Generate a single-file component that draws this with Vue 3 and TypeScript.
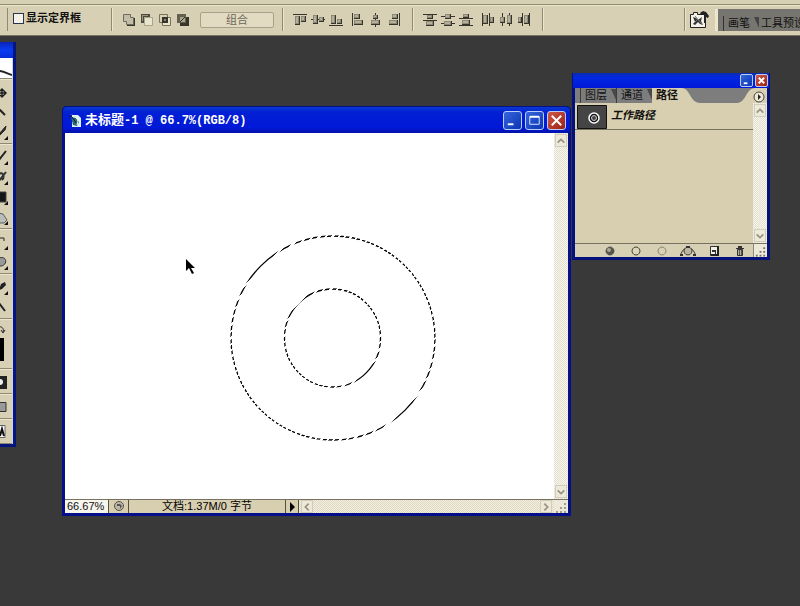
<script setup lang="ts">
import { ref } from 'vue'

interface Shape {
  d: string
  fill?: string
  stroke?: string
  width?: number
}
interface Icon {
  label: string
  shapes: Shape[]
}

const dark = '#37352b'
const mid = '#8b8878'
const pale = '#e9e4cc'

const box = (x: number, y: number, w: number, h: number): string => `M${x} ${y}h${w}v${h}h${-w}z`
const block = (x: number, y: number, w: number, h: number): Shape[] => [
  { d: box(x, y, w, h), fill: dark },
  { d: box(x, y, w - 1, h - 1), fill: mid },
  { d: box(x + 1, y + 1, w - 3, h - 3), fill: '#b5b09a' },
]
const bar = (x: number, y: number, w: number, h: number): Shape => ({ d: box(x, y, w, h), fill: dark })

const combine: Icon[] = [
  {
    label: '添加到形状区域',
    shapes: [
      { d: 'M5 5h8v8h-8z', fill: dark },
      { d: 'M1.5 1.5h7v3h3v7h-7v-3h-3z', fill: '#c1bda9', stroke: '#6d6a5a' },
    ],
  },
  {
    label: '从形状区域减去',
    shapes: [
      { d: 'M4.5 4.5h8v8h-8z', fill: pale, stroke: '#aaa58d' },
      { d: 'M1 1h9v3h-6v6h-3z', fill: '#4e4b3e' },
      { d: 'M2 2h6v1h-5v5h-1z', fill: '#98937e' },
    ],
  },
  {
    label: '交叉形状区域',
    shapes: [
      { d: 'M4.5 4.5h8v8h-8z', fill: pale, stroke: '#77725f' },
      { d: 'M1.5 1.5h8v8h-8z', stroke: '#77725f' },
      { d: 'M4 4h6v6h-6z', fill: dark },
      { d: 'M6 6h2v2h-2z', fill: mid },
    ],
  },
  {
    label: '重叠形状区域除外',
    shapes: [
      { d: 'M4 4h9v9h-9z', fill: dark },
      { d: 'M1 1h9v9h-9z', fill: '#65614f' },
      { d: 'M4 4h5v5h-5z', fill: '#a8a38d' },
      { d: 'M4 9l5-5', stroke: dark },
    ],
  },
]

const arrange: Icon[][] = [
  [
    { label: '顶对齐', shapes: [bar(0, 1, 14, 1), ...block(2, 3, 5, 9), ...block(8, 3, 5, 6)] },
    { label: '垂直居中对齐', shapes: [bar(0, 6, 14, 1), ...block(2, 2, 5, 9), ...block(8, 4, 5, 5)] },
    { label: '底对齐', shapes: [bar(0, 12, 14, 1), ...block(2, 2, 5, 9), ...block(8, 6, 5, 5)] },
  ],
  [
    { label: '左对齐', shapes: [bar(1, 0, 1, 13), ...block(3, 1, 6, 5), ...block(3, 7, 9, 5)] },
    { label: '水平居中对齐', shapes: [bar(6, 0, 1, 14), ...block(4, 2, 5, 4), ...block(2, 7, 9, 5)] },
    { label: '右对齐', shapes: [bar(12, 0, 1, 13), ...block(5, 1, 6, 5), ...block(2, 7, 9, 5)] },
  ],
  [
    { label: '按顶分布', shapes: [bar(0, 1, 14, 1), ...block(4, 2, 6, 4), bar(0, 7, 14, 1), ...block(3, 8, 8, 5)] },
    { label: '垂直居中分布', shapes: [bar(0, 3, 14, 1), ...block(4, 1, 6, 5), bar(0, 10, 14, 1), ...block(3, 8, 8, 5)] },
    { label: '按底分布', shapes: [...block(4, 1, 6, 4), bar(0, 5, 14, 1), ...block(3, 7, 8, 5), bar(0, 12, 14, 1)] },
  ],
  [
    { label: '按左分布', shapes: [bar(1, 0, 1, 13), ...block(2, 2, 5, 9), bar(8, 0, 1, 13), ...block(9, 4, 4, 6)] },
    { label: '水平居中分布', shapes: [bar(3, 0, 1, 13), ...block(1, 4, 5, 6), bar(10, 0, 1, 13), ...block(8, 2, 5, 9)] },
    { label: '按右分布', shapes: [...block(1, 4, 4, 6), bar(5, 0, 1, 13), ...block(7, 2, 5, 9), bar(12, 0, 1, 13)] },
  ],
]

const corner: Shape = { d: 'M8 15v-4l-4 4z', fill: '#111' }

const toolGroups: Icon[][] = [
  [
    { label: '移动', shapes: [{ d: 'M-1 8H6M2 4V12M0 6l2-2 2 2M0 10l2 2 2-2M4 6l2 2-2 2', stroke: '#222', width: 1.5 }] },
    { label: '魔棒', shapes: [{ d: 'M-1 4L5 10', stroke: '#222', width: 2 }] },
    { label: '切片', shapes: [{ d: 'M-1 9L6 1L5 5L0 10z', fill: '#333', stroke: '#222' }, corner] },
  ],
  [
    { label: '画笔', shapes: [{ d: 'M-1 10L6 1', stroke: '#222', width: 2 }, corner] },
    { label: '历史记录画笔', shapes: [{ d: 'M-1 11L6 2M-1 4C3 1 5 7 2 10', stroke: '#333', width: 2 }, corner] },
    { label: '渐变', shapes: [{ d: 'M-1 2h7v10h-7z', fill: '#151515', stroke: '#444' }, corner] },
    { label: '减淡', shapes: [{ d: 'M-2 3L3 4L7 10L4 13H-2z', fill: '#b9beb8', stroke: '#596061' }, corner] },
  ],
  [
    { label: '文字', shapes: [{ d: 'M-1 3H4V6M-1 3V12', stroke: '#222', width: 1 }, corner] },
    { label: '形状', shapes: [{ d: 'M-1 3C8 0 8 12 -1 11z', fill: '#999', stroke: '#333' }, corner] },
  ],
  [
    { label: '吸管', shapes: [{ d: 'M-1 10L1 4L5 2L6 5L2 9z', fill: '#222' }, corner] },
    { label: '缩放', shapes: [{ d: 'M-1 3L5 11', stroke: '#222', width: 2 }] },
  ],
]

const pathActions: Icon[] = [
  {
    label: '填充路径',
    shapes: [
      { d: 'M8 2a4 4 0 1 0 .01 0z', fill: '#55534a', stroke: '#555', width: 1 },
      { d: 'M7 3a2 2 0 1 0 .01 0z', fill: '#aaa791' },
    ],
  },
  { label: '描边路径', shapes: [{ d: 'M8 2a4 4 0 1 0 .01 0z', fill: '#ddd5bb', stroke: '#454338', width: 1 }] },
  { label: '载入选区', shapes: [{ d: 'M8 2a4 4 0 1 0 .01 0z', stroke: '#8b8774', width: 1 }] },
  {
    label: '生成工作路径',
    shapes: [
      { d: 'M0 10C2 8 2 4 7 3H9C14 4 14 8 16 10', stroke: '#333', width: 1 },
      { d: 'M8 2a4 4 0 1 0 .01 0z', fill: '#bdb69d', stroke: '#444', width: 1 },
      { d: 'M6 1h4v2h-4zM0 9h3v2h-3zM13 9h3v2h-3z', fill: '#333' },
    ],
  },
  {
    label: '新建路径',
    shapes: [
      { d: 'M4.5 1.5h7v9h-7z', fill: '#f3f0e4', stroke: '#333', width: 1 },
      { d: 'M11 1h2v10h-8v-2h6z', fill: '#222' },
      { d: 'M6 5h4v4h-1v-2h-3z', fill: '#333' },
    ],
  },
  {
    label: '删除路径',
    shapes: [
      { d: 'M5.5 4.5h5v6h-5z', fill: '#b7b19b', stroke: '#333', width: 1 },
      { d: 'M4 3h8v1h-8zM6 1h4v2h-4z', fill: '#333' },
      { d: 'M7.5 5v5M9.5 5v5', stroke: '#555', width: 1 },
    ],
  },
]

const tabs = ['图层', '通道', '路径']
const activeTab = ref('路径')
const showBounds = ref(false)
const zoom = ref('66.67%')
</script>

<template>
  <div class="workspace">
    <header class="options">
      <div class="field first">
        <input id="bounds" v-model="showBounds" type="checkbox" />
        <label for="bounds">显示定界框</label>
      </div>
      <div class="section combine">
        <div class="icons">
          <button v-for="i in combine" :key="i.label" class="ico" :aria-label="i.label">
            <svg viewBox="0 0 14 14"><path v-for="(s, n) in i.shapes" :key="n" :d="s.d" :fill="s.fill ?? 'none'" :stroke="s.stroke ?? 'none'" :stroke-width="s.width ?? 1" /></svg>
          </button>
        </div>
        <button class="group-btn">组合</button>
      </div>
      <div v-for="pair in [0, 2]" :key="pair" class="section arrange">
        <div v-for="g in [pair, pair + 1]" :key="g" class="icons">
          <button v-for="i in arrange[g]" :key="i.label" class="ico" :aria-label="i.label">
            <svg viewBox="0 0 14 14"><path v-for="(s, n) in i.shapes" :key="n" :d="s.d" :fill="s.fill ?? 'none'" :stroke="s.stroke ?? 'none'" :stroke-width="s.width ?? 1" /></svg>
          </button>
        </div>
      </div>
      <div class="section spacer"></div>
      <div class="section browse">
        <button class="browser" aria-label="文件浏览器">
          <svg viewBox="0 0 20 18">
            <path d="M1.500 16.500V3.500h3v-2h4v2h8v13z" fill="#f4f2e6" stroke="#222" />
            <path d="M4 6l3 1 2 2 4-3-1 4 2 4-3-1-2-2-3 3-2-1 2-2z" fill="#333" />
            <path d="M4 13l4-4M6 5l7 8" stroke="#777" />
            <path d="M11 2l3-2 3 1 3 4-1 2-2-1v6h-2V4h-3z" fill="#222" />
          </svg>
        </button>
      </div>
      <div class="well">
        <button>画笔<svg viewBox="0 0 9 15"><path d="M0 1h4l5 11V1z" fill="#444" /></svg></button>
        <button>工具预设</button>
      </div>
    </header>

    <aside class="toolbox">
      <div class="bar"></div>
      <div class="tools">
        <div class="feather">
          <svg viewBox="0 0 12 20"><path d="M-1 13C4 13 8 16 12 17" fill="none" stroke="#222" stroke-width="2" /></svg>
        </div>
        <div v-for="(g, k) in toolGroups" :key="k" class="tool-group">
          <button v-for="i in g" :key="i.label" class="tool" :aria-label="i.label">
            <svg viewBox="0 0 10 16"><path v-for="(s, n) in i.shapes" :key="n" :d="s.d" :fill="s.fill ?? 'none'" :stroke="s.stroke ?? 'none'" :stroke-width="s.width ?? 1" /></svg>
          </button>
        </div>
        <div class="tool-group swatch">
          <svg viewBox="0 0 10 45">
            <path d="M-1 6C3 5 4 9 3 11M1 9l2 3 2-3" fill="none" stroke="#222" />
            <path d="M-1 17h5v23h-5z" fill="#000" />
          </svg>
        </div>
        <div class="tool-group mode">
          <svg viewBox="0 0 10 20"><path d="M-1 5h8v13h-8z" fill="#222" /><circle cx="0" cy="11" r="3" fill="#eee" /></svg>
        </div>
        <div class="tool-group mode">
          <svg viewBox="0 0 10 20"><path d="M-1 6.500h7v9h-7z" fill="#999" stroke="#333" /></svg>
        </div>
        <div class="tool-group mode">
          <svg viewBox="0 0 10 20"><path d="M-1 4.500h6v12h-6z" fill="#fff" stroke="#666" /><path d="M0 15l2-7 2 7" fill="none" stroke="#111" stroke-width="2" /></svg>
        </div>
      </div>
    </aside>

    <main class="doc">
      <div class="title">
        <svg class="logo" viewBox="0 0 14 16">
          <path d="M1 1l3 1v12h9V5l-3-3H5" fill="#dff1ef" />
          <path d="M3 4l5 1 3 4-2 4-4-1-1-4z" fill="#246b76" />
          <path d="M1 2l4 3 3 5" fill="none" stroke="#123" />
          <path d="M8 4l2 4-1 4" fill="none" stroke="#eaf7ee" />
        </svg>
        <h1><span>未标题</span>-1 @ 66.7%(RGB/8)</h1>
        <button class="win" aria-label="最小化"><svg viewBox="0 0 18 18"><path d="M4 12h6v2h-6z" fill="#fff" /></svg></button>
        <button class="win" aria-label="最大化"><svg viewBox="0 0 18 18"><path d="M4 5h10v8h-10z" fill="none" stroke="#dfe9ff" /><path d="M4 4h10v2h-10z" fill="#fff" /></svg></button>
        <button class="win close" aria-label="关闭"><svg viewBox="0 0 18 18"><path d="M4 4l10 10M14 4l-10 10" stroke="#fff" stroke-width="2" /></svg></button>
      </div>
      <div class="view">
        <div class="canvas">
          <svg class="ants">
            <defs>
              <linearGradient id="march" gradientUnits="userSpaceOnUse" x1="163.7" y1="163.7" x2="166.9" y2="166.9" spreadMethod="repeat">
                <stop offset="0" stop-color="#000" />
                <stop offset="0.6" stop-color="#000" />
                <stop offset="0.6" stop-color="#fff" />
                <stop offset="1" stop-color="#fff" />
              </linearGradient>
            </defs>
            <ellipse cx="268" cy="205" rx="102" ry="102" />
            <ellipse cx="267.5" cy="205" rx="48" ry="49" />
          </svg>
          <svg class="cursor" viewBox="0 0 11 17"><path d="M1 0v12l3-3 3 6 2-1-3-5h4z" fill="#000" /></svg>
        </div>
        <div class="vscroll">
          <button aria-label="向上"><svg viewBox="0 0 12 12"><path d="M2 8l4-4 4 4" /></svg></button>
          <button aria-label="向下"><svg viewBox="0 0 12 12"><path d="M2 4l4 4 4-4" /></svg></button>
        </div>
      </div>
      <div class="status">
        <input v-model="zoom" class="zoom" aria-label="缩放比例" />
        <button class="cue" aria-label="版本提示">
          <svg viewBox="0 0 12 12"><circle cx="6" cy="6" r="4.500" fill="#bbb7a4" stroke="#555" /><path d="M4 4h3l2 2-2 3V6H4z" fill="#555" /></svg>
        </button>
        <span class="info">文档:1.37M/0 字节</span>
        <button class="more" aria-label="状态选项"><svg viewBox="0 0 12 12"><path d="M4 1l5 5-5 5z" fill="#000" /></svg></button>
        <div class="hscroll">
          <button aria-label="向左"><svg viewBox="0 0 12 12"><path d="M8 2l-4 4 4 4" /></svg></button>
          <button aria-label="向右"><svg viewBox="0 0 12 12"><path d="M4 2l4 4-4 4" /></svg></button>
        </div>
        <svg class="grip" viewBox="0 0 14 13"><path d="M10 3h2v2h-2zM10 7h2v2h-2zM6 7h2v2h-2zM10 11h2v2h-2zM6 11h2v2h-2zM2 11h2v2h-2z" fill="#a29f91" /></svg>
      </div>
    </main>

    <section class="panel">
      <div class="panel-bar">
        <button class="win" aria-label="最小化"><svg viewBox="0 0 12 12"><path d="M3 8h4v2h-4z" fill="#fff" /></svg></button>
        <button class="win close" aria-label="关闭"><svg viewBox="0 0 12 12"><path d="M3 3l6 6M9 3l-6 6" stroke="#fff" stroke-width="2" /></svg></button>
      </div>
      <div class="tabs">
        <button v-for="t in tabs" :key="t" :class="{ active: t === activeTab }" @click="activeTab = t">
          {{ t }}
          <svg v-if="t === activeTab" class="slope" viewBox="0 0 18 15"><path d="M0 0C8 0 8 15 18 15H0z" fill="#d8ceb0" /></svg>
          <svg v-else class="notch" viewBox="0 0 9 15"><path d="M0 1h4l5 11V1z" fill="#484848" /></svg>
        </button>
        <button class="menu" aria-label="面板菜单">
          <svg viewBox="0 0 30 15">
            <path d="M0 15C9 15 9 0 18 0H30V15z" fill="#d8ceb0" />
            <circle cx="22" cy="9" r="5" fill="#eee8d4" stroke="#444" />
            <path d="M21 6l3 3-3 3z" fill="#222" />
          </svg>
        </button>
      </div>
      <div class="panel-body">
        <ul>
          <li>
            <svg class="thumb" viewBox="0 0 30 24">
              <path d="M.5.5h29v23h-29z" fill="#454545" stroke="#111" />
              <circle cx="17" cy="13" r="5" fill="#111" stroke="#fff" stroke-width="1.500" />
              <circle cx="17" cy="13" r="2.500" fill="#454545" stroke="#ccc" />
            </svg>
            <em>工作路径</em>
          </li>
        </ul>
        <div class="vscroll">
          <button aria-label="向上"><svg viewBox="0 0 12 12"><path d="M2 8l4-4 4 4" /></svg></button>
          <button aria-label="向下"><svg viewBox="0 0 12 12"><path d="M2 4l4 4 4-4" /></svg></button>
        </div>
      </div>
      <div class="panel-foot">
        <button v-for="i in pathActions" :key="i.label" :aria-label="i.label">
          <svg viewBox="0 0 16 12"><path v-for="(s, n) in i.shapes" :key="n" :d="s.d" :fill="s.fill ?? 'none'" :stroke="s.stroke ?? 'none'" :stroke-width="s.width ?? 1" /></svg>
        </button>
        <svg class="grip" viewBox="0 0 14 13"><path d="M10 3h2v2h-2zM10 7h2v2h-2zM6 7h2v2h-2zM10 11h2v2h-2zM6 11h2v2h-2zM2 11h2v2h-2z" fill="#77735f" /></svg>
      </div>
    </section>
  </div>
</template>

<style>
body {
  margin: 0;
}
</style>

<style scoped>
* {
  box-sizing: border-box;
}
.workspace {
  position: relative;
  min-height: 100vh;
  overflow: hidden;
  background: #393939;
  color: #111;
  font: 11px/14px 'Liberation Sans', 'Noto Sans CJK SC', sans-serif;
}
button {
  margin: 0;
  padding: 0;
  border: 0;
  background: none;
  color: inherit;
  font: inherit;
}
svg {
  display: block;
}

/* Options bar */
.options {
  display: flex;
  height: 36px;
  padding: 8px 0 4px;
  border-bottom: 1px solid #77725f;
  background: linear-gradient(#d8d0b4 4px, #8f8a74 4px, #8f8a74 5px, #ece6cd 5px, #ece6cd 6px, #d8d0b4 6px);
}
.field {
  display: flex;
  align-items: center;
  gap: 2px;
  width: 104px;
  margin-left: 7px;
  padding: 0 0 3px 5px;
  border-left: 1px solid #8f8a74;
  white-space: nowrap;
  font-weight: 700;
}
.field input {
  appearance: none;
  width: 11px;
  height: 11px;
  margin: 0;
  border: 1px solid #26364f;
  background: #f3f1e8;
}
.field input:checked {
  background: #26364f;
}
.section {
  display: flex;
  align-items: center;
  padding: 0 10px;
  border-left: 1px solid #8f8a74;
  box-shadow: inset 1px 0 #ece6cd;
}
.icons {
  display: flex;
  gap: 3px;
}
.ico {
  width: 15px;
  height: 14px;
}
.ico svg {
  width: 14px;
  height: 14px;
}
.combine {
  width: 171px;
  justify-content: space-between;
  padding: 0 8px 0 10px;
}
.group-btn {
  width: 74px;
  height: 16px;
  border: 1px solid #a7a18a;
  border-radius: 2px;
  background: #e2dbc1;
  color: #6b6756;
  line-height: 14px;
}
.arrange {
  width: 130px;
  justify-content: space-between;
}
.spacer {
  flex: 1;
}
.browse {
  width: 31px;
  padding: 0 4px;
}
.browser svg {
  width: 20px;
  height: 18px;
}
.well {
  display: flex;
  align-items: flex-end;
  flex: 0 0 85px;
  overflow: hidden;
  margin-top: 1px;
  padding-left: 5px;
  border-left: 3px solid #ece6cd;
  background: #77756f;
}
.well button {
  display: flex;
  flex: none;
  height: 15px;
  padding-left: 4px;
  border-left: 1px solid #333;
  white-space: nowrap;
}
.well button:last-child {
  padding-left: 2px;
  border: 0;
}
.well svg,
.tabs .notch {
  flex: none;
  width: 9px;
  height: 15px;
}

/* Toolbox */
.toolbox {
  position: absolute;
  top: 42px;
  left: 0;
  width: 16px;
  padding: 0 3px 3px 0;
  background: #06147e;
}
.toolbox .bar {
  height: 16px;
  background: linear-gradient(#0924b8, #0a3cf0 50%, #0630d8);
}
.tools {
  border-right: 1px solid #c9d6e6;
  background: #d8d0b4;
}
.feather {
  height: 21px;
  border-bottom: 1px solid #8f8a74;
  background: #fff;
}
.feather svg {
  width: 12px;
  height: 20px;
}
.tool-group {
  padding: 2px 0;
  border-bottom: 1px solid #8f8a74;
  box-shadow: inset 0 1px #ece6cd;
}
.tool {
  display: flex;
  align-items: flex-end;
  height: 20px;
}
.tool svg {
  width: 10px;
  height: 16px;
}
.swatch svg {
  width: 10px;
  height: 45px;
}
.mode svg {
  width: 10px;
  height: 20px;
}

/* Document window */
.doc {
  position: absolute;
  top: 106px;
  left: 62px;
  display: flex;
  flex-direction: column;
  width: 509px;
  height: 410px;
  padding: 0 3px 3px;
  border-radius: 5px 5px 0 0;
  background: #04108a;
}
.title {
  display: flex;
  align-items: center;
  gap: 3px;
  height: 27px;
  margin: 0 -3px;
  padding: 1px 4px 0 5px;
  border: 1px solid #04108a;
  border-bottom: 0;
  border-radius: 5px 5px 0 0;
  background: linear-gradient(#0a3ad0, #0220d4 20%, #0018d8 80%, #0212a8);
}
.logo {
  width: 14px;
  height: 16px;
}
.title h1 {
  flex: 1;
  margin: 0;
  color: #fff;
  font: 700 12px/16px 'Liberation Mono', 'Noto Sans CJK SC', monospace;
  white-space: pre;
}
.title h1 span {
  font-size: 13px;
}
.win {
  width: 19px;
  height: 19px;
  border: 1px solid #b9cdf5;
  border-radius: 3px;
  background: linear-gradient(135deg, #3566dc, #0b34b4);
}
.win.close {
  background: linear-gradient(135deg, #cf5a48, #9c2015);
}
.win svg {
  width: 100%;
  height: 100%;
}
.view {
  display: flex;
  flex: 1;
}
.canvas {
  position: relative;
  flex: 1;
  background: #fff;
}
.ants {
  width: 100%;
  height: 100%;
}
.ants ellipse {
  fill: none;
  stroke: url(#march);
  stroke-width: 1.3;
}
.cursor {
  position: absolute;
  top: 126px;
  left: 120px;
  width: 11px;
  height: 17px;
}
.vscroll {
  display: flex;
  flex-direction: column;
  justify-content: space-between;
  width: 14px;
  padding: 1px;
  background: repeating-conic-gradient(#e3dfce 0 25%, #f7f5ed 0 50%) 0 0 / 2px 2px;
}
.vscroll button,
.hscroll button {
  width: 12px;
  height: 13px;
  border: 1px solid #d2cdb9;
  background: #ece8da;
}
.vscroll path,
.hscroll path {
  fill: none;
  stroke: #97927f;
  stroke-width: 2;
}
.vscroll svg,
.hscroll svg {
  width: 10px;
  height: 10px;
}
.status {
  display: flex;
  height: 14px;
  border-top: 1px solid #77725f;
  background: #d8ceb0;
}
.status button svg {
  height: 12px;
}
.zoom {
  width: 44px;
  padding: 0 0 0 2px;
  border: 0;
  border-right: 1px solid #55513f;
  outline: 0;
  background: #f6f5ee;
  color: #111;
  font: 11px/13px 'Liberation Sans', sans-serif;
}
.cue {
  display: flex;
  justify-content: center;
  width: 20px;
  border-right: 1px solid #55513f;
}
.cue svg {
  width: 12px;
}
.info {
  width: 157px;
  border-right: 1px solid #55513f;
  color: #000;
  line-height: 13px;
  text-align: center;
  white-space: nowrap;
}
.more {
  width: 13px;
  border-right: 1px solid #55513f;
}
.more svg {
  width: 12px;
}
.hscroll {
  display: flex;
  flex: 1;
  justify-content: space-between;
  padding: 0 2px;
  background: repeating-conic-gradient(#ddd7c2 0 25%, #f3f0e4 0 50%) 0 0 / 2px 2px;
}
.grip {
  width: 14px;
  height: 13px;
  background: #ece8da;
}

/* Paths panel */
.panel {
  position: absolute;
  top: 73px;
  left: 572px;
  display: flex;
  flex-direction: column;
  width: 198px;
  height: 187px;
  padding: 0 3px 3px;
  background: #04107c;
}
.panel-bar {
  display: flex;
  align-items: center;
  justify-content: flex-end;
  gap: 2px;
  height: 15px;
  margin: 0 -2px;
  padding-right: 1px;
  background: linear-gradient(#0a2ab0, #0228e0 30%, #0018d8);
}
.panel-bar .win {
  width: 13px;
  height: 13px;
  border-radius: 2px;
}
.tabs {
  display: flex;
  height: 15px;
  padding-left: 5px;
  background: #7d7d7d;
}
.tabs button {
  display: flex;
  align-items: center;
  justify-content: space-between;
  width: 36px;
  padding-left: 4px;
  border-left: 1px solid #3c3c3c;
  line-height: 15px;
  white-space: nowrap;
}
.tabs .slope {
  flex: none;
  width: 18px;
  height: 15px;
}
.tabs button.active {
  width: 48px;
  border-left: 0;
  background: linear-gradient(90deg, #d8ceb0 30px, transparent 30px);
  font-weight: 700;
}
.tabs .menu {
  width: 30px;
  margin-left: auto;
  padding: 0;
  border: 0;
}
.tabs .menu svg {
  width: 30px;
  height: 15px;
}
.panel-body {
  display: flex;
  flex: 1;
  background: #d8ceb0;
}
.panel-body ul {
  flex: 1;
  margin: 0;
  padding: 0;
  list-style: none;
}
.panel-body li {
  display: flex;
  gap: 4px;
  height: 27px;
  padding: 2px;
  border-bottom: 1px solid #77725f;
}
.thumb {
  width: 30px;
  height: 24px;
}
em {
  padding-top: 3px;
  font-weight: 700;
}
.panel-foot {
  display: flex;
  justify-content: flex-end;
  gap: 10px;
  height: 14px;
  border-top: 1px solid #77725f;
  background: #d8d0b4;
}
.panel-foot button svg {
  width: 16px;
  height: 12px;
}
.panel-foot .grip {
  margin-left: -5px;
  border-left: 1px solid #8f8a74;
}
</style>
